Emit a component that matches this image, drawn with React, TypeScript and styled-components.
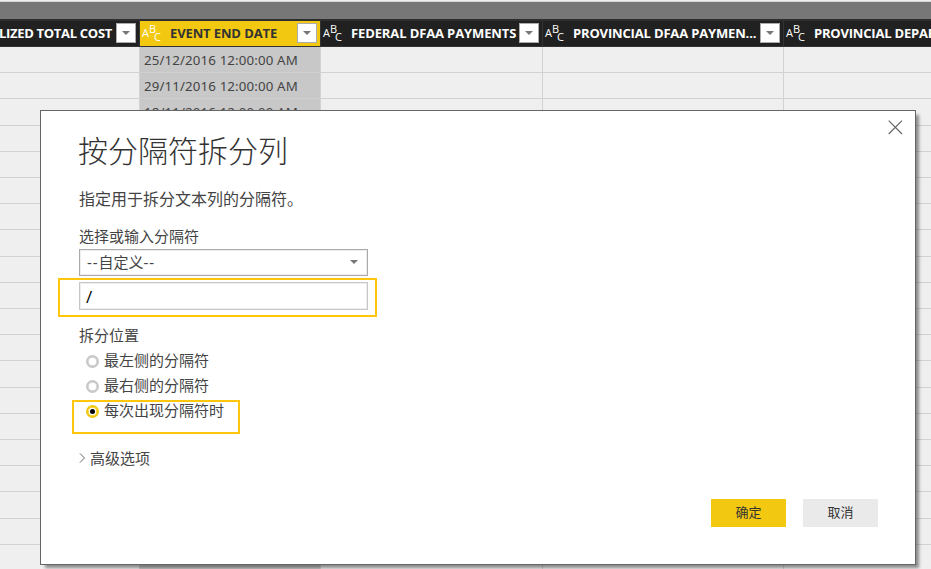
import React from "react";
import styled, { createGlobalStyle } from "styled-components";

const GlobalStyle = createGlobalStyle`
  * { box-sizing: border-box; }
  html, body { margin: 0; padding: 0; overflow: hidden; }
  body { font-family: "Noto Sans", "Noto Sans CJK SC", sans-serif; color: #444; }
`;

const Screen = styled.div`
  position: relative;
  width: 931px;
  height: 569px;
  overflow: hidden;
  background: #efefef;
  display: flex;
  flex-direction: column;
`;

const TopBar = styled.div`
  flex: none;
  height: 19px;
  background: #777;
  border-top: 1px solid #efefef;
  box-shadow: inset 0 1px 0 #d4d6d8;
`;

const Grid = styled.div`
  flex: 1;
  display: grid;
  grid-template-columns: 140px 181px 222px 241px 241px;
`;

const Column = styled.div`
  display: flex;
  flex-direction: column;
  min-width: 0;
`;

const HeaderCell = styled.div<{ $selected?: boolean; $alignEnd?: boolean }>`
  flex: none;
  height: 28px;
  display: flex;
  align-items: center;
  justify-content: ${(p) => (p.$alignEnd ? "flex-end" : "flex-start")};
  padding: 0 3px 1px 2px;
  border-top: 2px solid #2e2e2e;
  border-bottom: 1px solid #333;
  border-right: 1px solid #333;
  background: ${(p) => (p.$selected ? "#f2c811" : "#212121")};
  color: ${(p) => (p.$selected ? "#333" : "#fff")};
`;

const HeaderText = styled.span<{ $spacing: number }>`
  flex: 1;
  margin-left: 9px;
  font: 700 13px/20px "Open Sans", "Noto Sans", sans-serif;
  letter-spacing: ${(p) => p.$spacing}px;
  white-space: nowrap;
`;

const ClippedText = styled(HeaderText)`
  flex: none;
  margin: 0 4px 0 0;
`;

const FilterButton = styled.div`
  flex: none;
  width: 20px;
  height: 20px;
  display: grid;
  place-items: center;
  background: #fff;
  border: 1px solid #ababab;
`;

const Cell = styled.div<{ $selected?: boolean }>`
  flex: none;
  height: 26.21px;
  padding-left: 4px;
  border-right: 1px solid #d2d2d2;
  border-bottom: 1px solid ${(p) => (p.$selected ? "#d0d0d0" : "#d2d2d2")};
  background: ${(p) => (p.$selected ? "#c8c8c8" : "#efefef")};
  font: 400 13.3px/26px "Noto Sans", sans-serif;
  letter-spacing: 0.13px;
  color: #444;
  white-space: nowrap;
`;

const Dialog = styled.section`
  position: absolute;
  left: 40px;
  top: 110px;
  width: 876px;
  height: 455px;
  display: flex;
  flex-direction: column;
  padding: 0 37px 0 38px;
  background: #fff;
  border: 1px solid #666;
  box-shadow: 4px 4px 3px -1px rgba(0, 0, 0, 0.42);
`;

const CloseButton = styled.div`
  position: absolute;
  right: 12px;
  top: 8px;
  width: 15px;
  height: 17px;
  display: flex;
  align-items: center;
`;

const Title = styled.h1`
  margin: 15px 0 0 -1px;
  font: 300 30px/46px "Noto Sans CJK SC", sans-serif;
  color: #333;
`;

const Description = styled.p`
  margin: 14px 0 0;
  font: 400 16px/24px "Noto Sans CJK SC", sans-serif;
`;

const Label = styled.div<{ $top: number }>`
  margin-top: ${(p) => p.$top}px;
  font: 400 15px/24px "Noto Sans CJK SC", sans-serif;
`;

const Select = styled.div`
  width: 289px;
  height: 27px;
  margin-top: 1px;
  padding: 0 9px 2px 7px;
  display: flex;
  align-items: center;
  justify-content: space-between;
  border: 1px solid #aaa;
  box-shadow: inset 0 0 0 1px #eee;
  font: 400 15px/24px "Noto Sans", "Noto Sans CJK SC", sans-serif;
`;

const Dashes = styled.span`
  letter-spacing: 0.9px;
`;

const DelimiterInput = styled.div`
  position: relative;
  width: 289px;
  height: 28px;
  margin-top: 6px;
  padding-left: 6px;
  border: 1px solid #c6c6c6;
  box-shadow: inset 0 0 0 1px #eee;
  font: 400 17px/27px "Open Sans", sans-serif;
  color: #000;
`;

const Highlight = styled.div<{ $x: number; $y: number; $w: number; $h: number }>`
  position: absolute;
  left: ${(p) => p.$x}px;
  top: ${(p) => p.$y}px;
  width: ${(p) => p.$w}px;
  height: ${(p) => p.$h}px;
  border: 2px solid #ffc60a;
`;

const Options = styled.div`
  display: flex;
  flex-direction: column;
  padding-left: 7px;
`;

const Option = styled.div`
  position: relative;
  display: flex;
  align-items: center;
  gap: 5px;
  height: 25px;
  font: 400 15px/25px "Noto Sans CJK SC", sans-serif;
`;

const Radio = styled.span<{ $checked?: boolean }>`
  width: 13px;
  height: 13px;
  margin-top: 3px;
  display: grid;
  place-items: center;
  border-radius: 50%;
  border: 2px solid ${(p) => (p.$checked ? "#f2c811" : "#c8c8c8")};
  box-shadow: inset 0 0 0 0.7px ${(p) => (p.$checked ? "#f2c811" : "#c8c8c8")};
  &::after {
    content: "";
    width: 5px;
    height: 5px;
    border-radius: 50%;
    background: ${(p) => (p.$checked ? "#000" : "transparent")};
  }
`;

const Advanced = styled.div`
  display: flex;
  align-items: center;
  gap: 4px;
  margin-top: 24px;
  font: 400 15px/24px "Noto Sans CJK SC", sans-serif;
`;

const Actions = styled.div`
  display: flex;
  justify-content: flex-end;
  gap: 17px;
  margin: auto 0 37px;
`;

const ActionButton = styled.div<{ $primary?: boolean }>`
  width: 75px;
  height: 28px;
  text-align: center;
  background: ${(p) => (p.$primary ? "#f2c811" : "#eaeaea")};
  font: 400 13px/26px "Noto Sans CJK SC", sans-serif;
  color: #333;
`;

const TypeGlyph = styled.span`
  flex: none;
  width: 19px;
  height: 20px;
  display: flex;
  color: #fff;
  font: 500 11px/12px "Open Sans", "Noto Sans", sans-serif;
`;

const Letter = styled.span<{ $drop: number; $width: number }>`
  width: ${(p) => p.$width}px;
  margin-top: ${(p) => p.$drop}px;
`;

const TextTypeIcon = () => (
  <TypeGlyph>
    <Letter $drop={4} $width={7}>A</Letter>
    <Letter $drop={0} $width={5}>B</Letter>
    <Letter $drop={8} $width={7}>C</Letter>
  </TypeGlyph>
);

const Caret = () => (
  <svg width="8" height="4" viewBox="0 0 8 4">
    <path d="M0 0H8L4 4Z" fill="#777" />
  </svg>
);

type ColumnData = {
  name: string;
  spacing: number;
  selected?: boolean;
  clipped?: boolean;
  values?: string[];
};

const columns: ColumnData[] = [
  { name: "LIZED TOTAL COST", spacing: -0.3, clipped: true },
  {
    name: "EVENT END DATE",
    spacing: -0.12,
    selected: true,
    values: ["25/12/2016 12:00:00 AM", "29/11/2016 12:00:00 AM", "18/11/2016 12:00:00 AM"],
  },
  { name: "FEDERAL DFAA PAYMENTS", spacing: -0.12 },
  { name: "PROVINCIAL DFAA PAYMEN...", spacing: -0.16 },
  { name: "PROVINCIAL DEPAR", spacing: -0.2 },
];

const rows = Array.from({ length: 20 }, (_, i) => i);

export default function App() {
  return (
    <>
      <GlobalStyle />
      <Screen>
        <TopBar />
        <Grid>
          {columns.map((c) => (
            <Column key={c.name}>
              <HeaderCell $selected={c.selected} $alignEnd={c.clipped}>
                {c.clipped ? (
                  <ClippedText $spacing={c.spacing}>{c.name}</ClippedText>
                ) : (
                  <>
                    <TextTypeIcon />
                    <HeaderText $spacing={c.spacing}>{c.name}</HeaderText>
                  </>
                )}
                <FilterButton>
                  <Caret />
                </FilterButton>
              </HeaderCell>
              {rows.map((r) => (
                <Cell key={r} $selected={c.selected}>
                  {c.values?.[r]}
                </Cell>
              ))}
            </Column>
          ))}
        </Grid>
        <Dialog>
          <CloseButton>
            <svg width="15" height="15" viewBox="0 0 15 15">
              <path d="M0.7 0.7L14 14M14 0.7L0.7 14" stroke="#666" strokeWidth="1.2" />
            </svg>
          </CloseButton>
          <Title>按分隔符拆分列</Title>
          <Description>指定用于拆分文本列的分隔符。</Description>
          <Label $top={14}>选择或输入分隔符</Label>
          <Select>
            <span>
              <Dashes>--</Dashes>自定义<Dashes>--</Dashes>
            </span>
            <Caret />
          </Select>
          <DelimiterInput>
            /
            <Highlight $x={-22} $y={-5} $w={319} $h={39} />
          </DelimiterInput>
          <Label $top={13}>拆分位置</Label>
          <Options>
            <Option>
              <Radio />
              最左侧的分隔符
            </Option>
            <Option>
              <Radio />
              最右侧的分隔符
            </Option>
            <Option>
              <Radio $checked />
              每次出现分隔符时
              <Highlight $x={-14} $y={3} $w={168} $h={34} />
            </Option>
          </Options>
          <Advanced>
            <svg width="7" height="10" viewBox="0 0 7 10">
              <path d="M1 0.5L5.5 5L1 9.5" fill="none" stroke="#666" />
            </svg>
            高级选项
          </Advanced>
          <Actions>
            <ActionButton $primary>确定</ActionButton>
            <ActionButton>取消</ActionButton>
          </Actions>
        </Dialog>
      </Screen>
    </>
  );
}
